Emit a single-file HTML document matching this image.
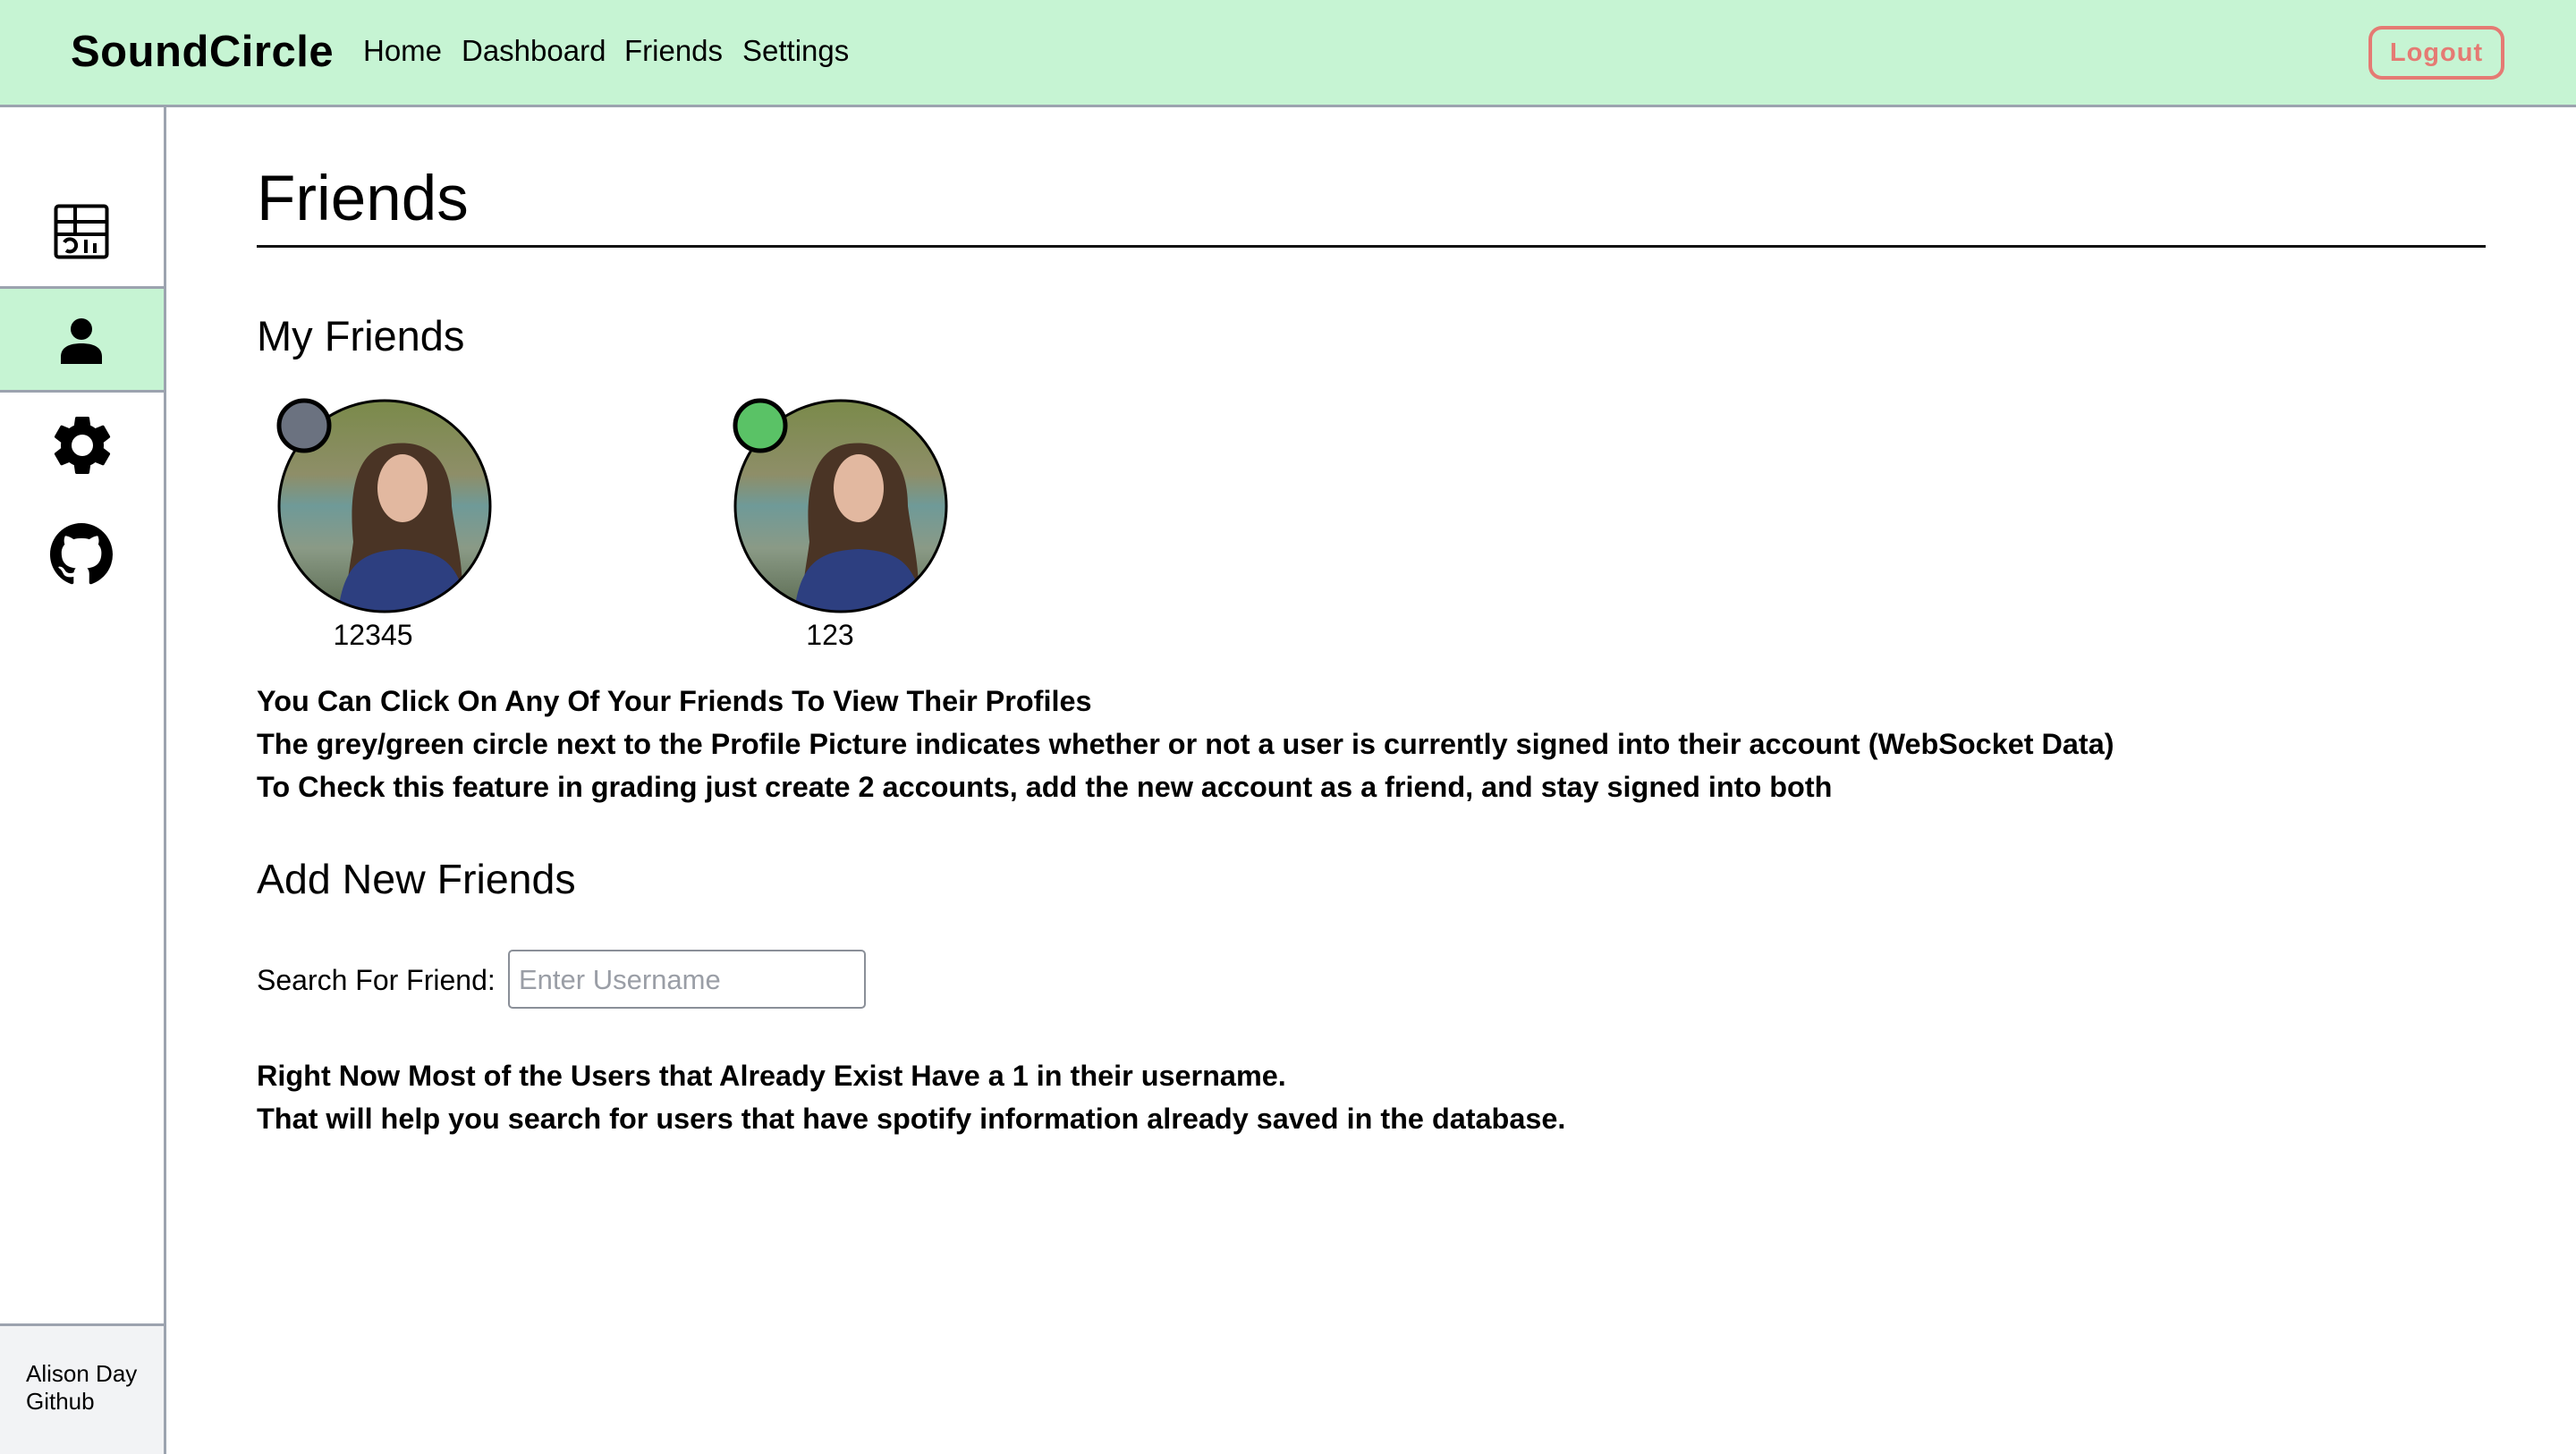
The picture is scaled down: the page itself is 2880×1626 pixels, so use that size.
<!DOCTYPE html>
<html><head><meta charset="utf-8">
<style>
*{box-sizing:border-box;margin:0;padding:0}
html,body{width:2880px;height:1626px;overflow:hidden;background:#fff;font-family:"Liberation Sans",Helvetica,Arial,sans-serif;color:#000}
.hdr{position:absolute;left:0;top:0;width:2880px;height:120px;background:#c6f4d3;border-bottom:3px solid #9ca3af}
.logo{position:absolute;left:79px;top:30px;font-size:49px;font-weight:bold;letter-spacing:0.5px}
.nav{position:absolute;top:38px;font-size:33px}
.logout{position:absolute;left:2648px;top:29px;width:152px;height:60px;border:4px solid #e57a73;border-radius:15px;color:#e57a73;font-weight:bold;font-size:29px;text-align:center;line-height:52px;letter-spacing:1px}
.side{position:absolute;left:0;top:120px;width:186px;height:1506px;border-right:3px solid #9ca3af}
.act{position:absolute;left:0;top:200px;width:183px;height:119px;background:#c6f4d3;border-top:3px solid #9ca3af;border-bottom:3px solid #9ca3af}
.foot{position:absolute;left:0;top:1360px;width:183px;height:146px;background:#f2f3f5;border-top:3px solid #9ca3af;font-size:26px;line-height:31px;padding:38px 0 0 29px}
.ic{position:absolute}
h1{position:absolute;left:287px;top:182px;font-size:71px;font-weight:normal}
.rule{position:absolute;left:287px;top:274px;width:2492px;height:3px;background:#111}
.h2{position:absolute;left:287px;font-size:47px;font-weight:normal}
.b{position:absolute;left:287px;font-size:32.4px;font-weight:bold;white-space:nowrap}
.lbl{position:absolute;font-size:32px;text-align:center;width:200px}
.inp{position:absolute;left:568px;top:1062px;width:400px;height:66px;border:2px solid #8a8f98;border-radius:5px;font-size:31px;color:#9a9ea6;padding:14px 0 0 10px}
</style></head><body>
<div class="hdr">
 <div class="logo">SoundCircle</div>
 <div class="nav" style="left:406px">Home</div>
 <div class="nav" style="left:516px">Dashboard</div>
 <div class="nav" style="left:698px">Friends</div>
 <div class="nav" style="left:830px">Settings</div>
 <div class="logout">Logout</div>
</div>
<div class="side">
 <svg class="ic" style="left:60px;top:108px" width="62" height="62" viewBox="0 0 62 62"><rect x="2.5" y="2.5" width="57" height="57" rx="3" fill="none" stroke="#000" stroke-width="4"/><line x1="2" y1="20" x2="60" y2="20" stroke="#000" stroke-width="4"/><line x1="2" y1="34" x2="60" y2="34" stroke="#000" stroke-width="4"/><line x1="24" y1="2" x2="24" y2="34" stroke="#000" stroke-width="4"/><path d="M12 43 a7 7 0 1 1 2 9" fill="none" stroke="#000" stroke-width="4"/><line x1="36" y1="40" x2="36" y2="55" stroke="#000" stroke-width="4"/><line x1="46" y1="44" x2="46" y2="55" stroke="#000" stroke-width="4"/></svg>
 <div class="act">
  <svg class="ic" style="left:66px;top:32px" width="50" height="52" viewBox="0 0 50 52"><circle cx="25" cy="13" r="12"/><path d="M2 52 V44 C2 33 12 29 25 29 C38 29 48 33 48 44 V52 Z"/></svg>
 </div>
 <svg class="ic" style="left:52px;top:338px" width="80" height="80" viewBox="0 0 24 24"><path d="M19.14 12.94c.04-.3.06-.61.06-.94 0-.32-.02-.64-.07-.94l2.03-1.58a.49.49 0 0 0 .12-.61l-1.92-3.320a.49.49 0 0 0-.59-.22l-2.39.96c-.5-.38-1.03-.7-1.620-.94l-.36-2.54a.48.48 0 0 0-.48-.41h-3.84c-.24 0-.43.17-.47.41l-.36 2.54c-.59.24-1.13.57-1.62.94l-2.39-.96c-.22-.08-.47 0-.59.22L2.74 8.87c-.12.21-.08.47.12.61l2.03 1.58c-.05.3-.09.63-.09.94s.02.64.07.94l-2.03 1.58a.49.49 0 0 0-.12.61l1.92 3.32c.12.22.37.29.59.22l2.39-.96c.5.38 1.03.7 1.62.94l.36 2.54c.05.24.24.41.48.41h3.84c.24 0 .44-.17.47-.41l.36-2.54c.59-.24 1.13-.56 1.62-.94l2.39.96c.22.08.47 0 .59-.22l1.92-3.32c.12-.22.07-.47-.12-.61l-2.01-1.58zM12 15.6A3.6 3.6 0 1 1 12 8.4a3.6 3.6 0 0 1 0 7.2z"/></svg>
 <svg class="ic" style="left:56px;top:465px" width="70" height="70" viewBox="0 0 16 16"><path d="M8 0C3.58 0 0 3.58 0 8c0 3.54 2.29 6.53 5.47 7.590.4.07.55-.17.55-.38 0-.19-.01-.82-.01-1.49-2.01.37-2.53-.49-2.69-.94-.09-.23-.48-.94-.82-1.13-.28-.15-.68-.52-.01-.53.63-.01 1.08.58 1.23.82.72 1.21 1.87.87 2.33.66.07-.52.28-.87.51-1.07-1.78-.2-3.64-.89-3.64-3.95 0-.87.31-1.59.82-2.15-.08-.2-.36-1.02.08-2.12 0 0 .67-.21 2.2.82.64-.18 1.32-.27 2-.27.68 0 1.36.09 2 .27 1.53-1.04 2.2-.82 2.2-.82.44 1.1.16 1.92.08 2.12.51.56.82 1.27.82 2.15 0 3.07-1.87 3.75-3.65 3.95.29.25.54.73.54 1.48 0 1.07-.01 1.93-.01 2.2 0 .21.15.46.55.38A8.013 8.013 0 0 0 16 8c0-4.42-3.58-8-8-8z"/></svg>
 <div class="foot">Alison Day<br>Github</div>
</div>

<h1>Friends</h1>
<div class="rule"></div>
<div class="h2" style="top:348px">My Friends</div>

<svg style="position:absolute;left:0;top:0" width="1200" height="720">
 <defs>
  <linearGradient id="bg" x1="0" y1="0" x2="0" y2="1">
   <stop offset="0" stop-color="#7a8a4a"/><stop offset="0.35" stop-color="#8e8e68"/><stop offset="0.5" stop-color="#6f9a98"/><stop offset="0.7" stop-color="#8a9a86"/><stop offset="1" stop-color="#5a6a50"/>
  </linearGradient>
  <clipPath id="cp"><circle cx="0" cy="0" r="118"/></clipPath>
  <g id="av">
   <g clip-path="url(#cp)">
   <circle cx="0" cy="0" r="118" fill="url(#bg)"/>
   <path d="M10 -70 C-35 -65 -40 -10 -35 40 C-40 80 -50 110 -30 118 L80 118 C95 90 80 40 75 0 C75 -45 55 -75 10 -70Z" fill="#4a3425"/>
   <ellipse cx="20" cy="-20" rx="28" ry="38" fill="#e2b8a0"/>
   <path d="M-52 118 C-45 60 -20 50 20 48 C60 50 85 60 92 118Z" fill="#2d3f80"/>
   </g>
   <circle cx="0" cy="0" r="118" fill="none" stroke="#000" stroke-width="3"/>
  </g>
 </defs>
 <use href="#av" x="430" y="566"/>
 <use href="#av" x="940" y="566"/>
 <circle cx="340" cy="476" r="28" fill="#6b7280" stroke="#000" stroke-width="5"/>
 <circle cx="850" cy="476" r="28" fill="#5ac266" stroke="#000" stroke-width="5"/>
</svg>
<div class="lbl" style="left:317px;top:692px">12345</div>
<div class="lbl" style="left:828px;top:692px">123</div>

<div class="b" style="top:766px">You Can Click On Any Of Your Friends To View Their Profiles</div>
<div class="b" style="top:814px">The grey/green circle next to the Profile Picture indicates whether or not a user is currently signed into their account (WebSocket Data)</div>
<div class="b" style="top:862px">To Check this feature in grading just create 2 accounts, add the new account as a friend, and stay signed into both</div>

<div class="h2" style="top:956px;font-size:46.5px">Add New Friends</div>
<div style="position:absolute;left:287px;top:1078px;font-size:32px">Search For Friend:</div>
<div class="inp">Enter Username</div>

<div class="b" style="top:1185px">Right Now Most of the Users that Already Exist Have a 1 in their username.</div>
<div class="b" style="top:1233px">That will help you search for users that have spotify information already saved in the database.</div>
</body></html>
